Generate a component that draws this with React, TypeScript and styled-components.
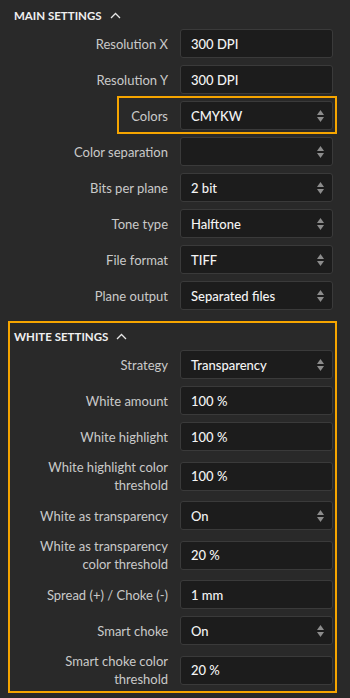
import * as React from "react"
import styled, { createGlobalStyle } from "styled-components"

const GlobalStyle = createGlobalStyle`
  html, body {
    margin: 0;
    padding: 0;
    background: #292929;
  }
  body {
    font-family: Lato, "Noto Sans", sans-serif;
    -webkit-font-smoothing: antialiased;
  }
`

const Page = styled.div`
  width: 350px;
  min-height: 698px;
  box-sizing: border-box;
  padding: 0 13px 0 8px;
  background: #292929;
`

const Section = styled.section<{ $highlight?: boolean }>`
  display: flex;
  flex-direction: column;
  gap: 7px;
  box-sizing: border-box;
  border: 2px solid ${(p) => (p.$highlight ? "#f6a500" : "transparent")};
  padding: ${(p) => (p.$highlight ? "4px 2px 3px 4px" : "4px 2px 0 4px")};
  margin-top: ${(p) => (p.$highlight ? "9px" : "0")};
`

const Header = styled.div`
  display: flex;
  align-items: center;
  gap: 8px;
  height: 18px;
  margin-bottom: -2px;
  color: #f0f0f0;
  font-size: 11.5px;
  font-weight: 700;
  text-transform: uppercase;
`

const Row = styled.div<{ $highlight?: boolean }>`
  position: relative;
  display: grid;
  grid-template-columns: 1fr 153px;
  column-gap: 12px;
  align-items: center;
  min-height: 29px;

  ${(p) =>
    p.$highlight &&
    `
    &::after {
      content: "";
      position: absolute;
      top: -5px;
      bottom: -4px;
      left: 103px;
      right: -4px;
      border: 2px solid #f6a500;
      pointer-events: none;
    }
  `}
`

const Label = styled.label`
  justify-self: end;
  max-width: 132px;
  color: #c9c9c9;
  font-size: 13px;
  line-height: 18px;
  text-align: right;
`

const Field = styled.div`
  position: relative;
  display: flex;
  align-items: center;
  height: 29px;
  box-sizing: border-box;
  padding: 0 10px;
  background: #1c1c1c;
  border: 1px solid #3a3a3a;
  border-radius: 3px;
  color: #f4f4f4;
  font-size: 13px;
  font-weight: 500;
`

const FieldText = styled.span`
  flex: 1;
`

const Arrows = styled.svg`
  flex: none;
  margin-right: -2px;
`

const Chevron = () => (
  <svg width="11" height="7" viewBox="0 0 11 7">
    <polyline points="1,6 5.5,1.5 10,6" fill="none" stroke="#e6e6e6" strokeWidth="1.3" />
  </svg>
)

const SelectArrows = () => (
  <Arrows width="7" height="12" viewBox="0 0 7 12">
    <polygon points="3.5,0 7,5 0,5" fill="#8c8c8c" />
    <polygon points="0,7 7,7 3.5,12" fill="#8c8c8c" />
  </Arrows>
)

interface SettingProps {
  label: string
  value: string
  select?: boolean
  highlight?: boolean
}

const Setting: React.FC<SettingProps> = ({ label, value, select, highlight }) => (
  <Row $highlight={highlight}>
    <Label>{label}</Label>
    <Field>
      <FieldText>{value}</FieldText>
      {select && <SelectArrows />}
    </Field>
  </Row>
)

const mainSettings: SettingProps[] = [
  { label: "Resolution X", value: "300 DPI" },
  { label: "Resolution Y", value: "300 DPI" },
  { label: "Colors", value: "CMYKW", select: true, highlight: true },
  { label: "Color separation", value: "", select: true },
  { label: "Bits per plane", value: "2 bit", select: true },
  { label: "Tone type", value: "Halftone", select: true },
  { label: "File format", value: "TIFF", select: true },
  { label: "Plane output", value: "Separated files", select: true },
]

const whiteSettings: SettingProps[] = [
  { label: "Strategy", value: "Transparency", select: true },
  { label: "White amount", value: "100 %" },
  { label: "White highlight", value: "100 %" },
  { label: "White highlight color threshold", value: "100 %" },
  { label: "White as transparency", value: "On", select: true },
  { label: "White as transparency color threshold", value: "20 %" },
  { label: "Spread (+) / Choke (-)", value: "1 mm" },
  { label: "Smart choke", value: "On", select: true },
  { label: "Smart choke color threshold", value: "20 %" },
]

export default function App() {
  return (
    <Page>
      <GlobalStyle />
      <Section>
        <Header>
          Main settings <Chevron />
        </Header>
        {mainSettings.map((s) => (
          <Setting key={s.label} {...s} />
        ))}
      </Section>
      <Section $highlight>
        <Header>
          White settings <Chevron />
        </Header>
        {whiteSettings.map((s) => (
          <Setting key={s.label} {...s} />
        ))}
      </Section>
    </Page>
  )
}
